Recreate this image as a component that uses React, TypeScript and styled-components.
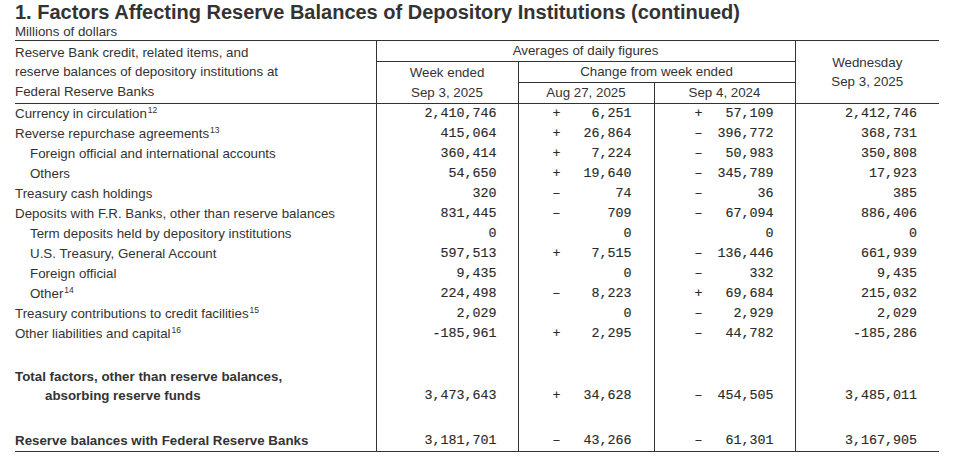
import React from "react";
import styled, { createGlobalStyle } from "styled-components";

const Global = createGlobalStyle`
  html, body { margin: 0; padding: 0; background: #fff; }
  body { font-family: "Liberation Sans", Arial, sans-serif; color: #333; }
`;

const Page = styled.div`
  padding: 0 15px;
  width: 924px;
`;

const Title = styled.h1`
  margin: 0;
  padding-top: 1px;
  font-size: 20px;
  line-height: 22px;
  font-weight: bold;
  color: #333;
  white-space: nowrap;
`;

const Subtitle = styled.div`
  font-size: 13.33px;
  line-height: 17px;
  color: #333;
`;

const Table = styled.table`
  border-collapse: collapse;
  table-layout: fixed;
  width: 924px;
  border-top: 1px solid #333;
  border-bottom: 1px solid #333;
  font-size: 13.33px;
  color: #333;
`;

const HeadCell = styled.th<{ $left?: boolean; $lh?: number }>`
  font-weight: normal;
  padding: 0;
  height: 20px;
  line-height: ${(p) => p.$lh ?? 20}px;
  text-align: ${(p) => (p.$left ? "left" : "center")};
  vertical-align: middle;
  border-bottom: 1px solid #333;
  border-left: ${(p) => (p.$left ? "none" : "1px solid #333")};
  white-space: nowrap;
`;

const Row = styled.tr<{ $h?: number }>`
  height: ${(p) => p.$h ?? 20}px;
`;

const LabelCell = styled.td<{ $indent?: number; $bold?: boolean }>`
  padding: 0 0 0 ${(p) => (p.$indent ?? 0) * 15}px;
  line-height: 20px;
  white-space: nowrap;
  font-weight: ${(p) => (p.$bold ? "bold" : "normal")};
  vertical-align: middle;
`;

const TotalLabel = styled.td`
  padding: 0;
  font-weight: bold;
  line-height: 19px;
  white-space: nowrap;
  vertical-align: bottom;
`;

const SubLine = styled.div`
  padding-left: 30px;
`;

const NumCell = styled.td<{ $pr?: number; $bottom?: boolean }>`
  border-left: 1px solid #333;
  padding: 0 ${(p) => p.$pr ?? 21}px 0 0;
  text-align: right;
  font-family: "Liberation Mono", "Courier New", monospace;
  font-size: 13.33px;
  line-height: ${(p) => (p.$bottom ? 19 : 20)}px;
  vertical-align: ${(p) => (p.$bottom ? "bottom" : "middle")};
  white-space: nowrap;
  color: #2a2a2a;
  -webkit-text-stroke: 0.15px #2a2a2a;
`;

const Change = styled.div`
  display: flex;
  justify-content: flex-end;
  gap: 7px;
`;

const Sign = styled.span`
  width: 8px;
  text-align: center;
`;

const Value = styled.span`
  width: 64px;
  text-align: right;
`;

const Sup = styled.sup`
  font-size: 8.5px;
  vertical-align: 5px;
  line-height: 0;
  margin-left: 1px;
`;

type Chg = [string, string];
type DataRow = {
  label: string;
  sup?: string;
  indent?: number;
  week: string;
  aug: Chg;
  sep: Chg;
  wed: string;
};

const rows: DataRow[] = [
  { label: "Currency in circulation", sup: "12", week: "2,410,746", aug: ["+", "6,251"], sep: ["+", "57,109"], wed: "2,412,746" },
  { label: "Reverse repurchase agreements", sup: "13", week: "415,064", aug: ["+", "26,864"], sep: ["–", "396,772"], wed: "368,731" },
  { label: "Foreign official and international accounts", indent: 1, week: "360,414", aug: ["+", "7,224"], sep: ["–", "50,983"], wed: "350,808" },
  { label: "Others", indent: 1, week: "54,650", aug: ["+", "19,640"], sep: ["–", "345,789"], wed: "17,923" },
  { label: "Treasury cash holdings", week: "320", aug: ["–", "74"], sep: ["–", "36"], wed: "385" },
  { label: "Deposits with F.R. Banks, other than reserve balances", week: "831,445", aug: ["–", "709"], sep: ["–", "67,094"], wed: "886,406" },
  { label: "Term deposits held by depository institutions", indent: 1, week: "0", aug: ["", "0"], sep: ["", "0"], wed: "0" },
  { label: "U.S. Treasury, General Account", indent: 1, week: "597,513", aug: ["+", "7,515"], sep: ["–", "136,446"], wed: "661,939" },
  { label: "Foreign official", indent: 1, week: "9,435", aug: ["", "0"], sep: ["–", "332"], wed: "9,435" },
  { label: "Other", sup: "14", indent: 1, week: "224,498", aug: ["–", "8,223"], sep: ["+", "69,684"], wed: "215,032" },
  { label: "Treasury contributions to credit facilities", sup: "15", week: "2,029", aug: ["", "0"], sep: ["–", "2,929"], wed: "2,029" },
  { label: "Other liabilities and capital", sup: "16", week: "-185,961", aug: ["+", "2,295"], sep: ["–", "44,782"], wed: "-185,286" },
];

const ChangeVal: React.FC<{ c: Chg }> = ({ c }) => (
  <Change>
    <Sign>{c[0]}</Sign>
    <Value>{c[1]}</Value>
  </Change>
);

const Numbers: React.FC<{ week: string; aug: Chg; sep: Chg; wed: string; bottom?: boolean }> = ({ week, aug, sep, wed, bottom }) => (
  <>
    <NumCell $pr={21} $bottom={bottom}>{week}</NumCell>
    <NumCell $pr={22} $bottom={bottom}><ChangeVal c={aug} /></NumCell>
    <NumCell $pr={21} $bottom={bottom}><ChangeVal c={sep} /></NumCell>
    <NumCell $pr={22} $bottom={bottom}>{wed}</NumCell>
  </>
);

const Spacer: React.FC<{ h: number }> = ({ h }) => (
  <Row $h={h}>
    <LabelCell />
    <NumCell />
    <NumCell />
    <NumCell />
    <NumCell />
  </Row>
);

export default function App() {
  return (
    <>
      <Global />
      <Page>
        <Title>1. Factors Affecting Reserve Balances of Depository Institutions (continued)</Title>
        <Subtitle>Millions of dollars</Subtitle>
        <Table>
          <colgroup>
            <col style={{ width: 361 }} />
            <col style={{ width: 142 }} />
            <col style={{ width: 136 }} />
            <col style={{ width: 141 }} />
            <col style={{ width: 144 }} />
          </colgroup>
          <thead>
            <tr>
              <HeadCell rowSpan={3} $left $lh={19.5}>
                Reserve Bank credit, related items, and
                <br />
                reserve balances of depository institutions at
                <br />
                Federal Reserve Banks
              </HeadCell>
              <HeadCell colSpan={3}>Averages of daily figures</HeadCell>
              <HeadCell rowSpan={3} $lh={19}>
                Wednesday
                <br />
                Sep 3, 2025
              </HeadCell>
            </tr>
            <tr>
              <HeadCell rowSpan={2}>
                Week ended
                <br />
                Sep 3, 2025
              </HeadCell>
              <HeadCell colSpan={2}>Change from week ended</HeadCell>
            </tr>
            <tr>
              <HeadCell>Aug 27, 2025</HeadCell>
              <HeadCell>Sep 4, 2024</HeadCell>
            </tr>
          </thead>
          <tbody>
            {rows.map((r) => (
              <Row key={r.label}>
                <LabelCell $indent={r.indent}>
                  {r.label}
                  {r.sup && <Sup>{r.sup}</Sup>}
                </LabelCell>
                <Numbers week={r.week} aug={r.aug} sep={r.sep} wed={r.wed} />
              </Row>
            ))}
            <Spacer h={23} />
            <Row $h={38}>
              <TotalLabel>
                Total factors, other than reserve balances,
                <SubLine>absorbing reserve funds</SubLine>
              </TotalLabel>
              <Numbers bottom week="3,473,643" aug={["+", "34,628"]} sep={["–", "454,505"]} wed="3,485,011" />
            </Row>
            <Spacer h={26} />
            <Row>
              <LabelCell $bold>Reserve balances with Federal Reserve Banks</LabelCell>
              <Numbers week="3,181,701" aug={["–", "43,266"]} sep={["–", "61,301"]} wed="3,167,905" />
            </Row>
          </tbody>
        </Table>
      </Page>
    </>
  );
}
